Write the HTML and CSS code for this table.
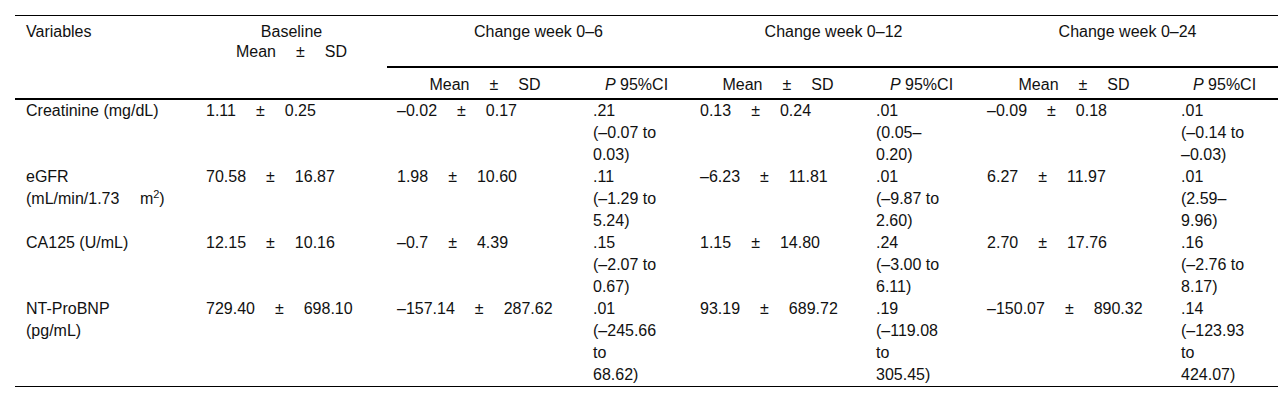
FILE: index.html
```html
<!DOCTYPE html>
<html lang="en">
<head>
<meta charset="utf-8">
<title>Table</title>
<link rel="stylesheet" href="styles.css">
</head>
<body>
<table class="data-table">
  <colgroup>
    <col class="c-var">
    <col class="c-base">
    <col class="c-mean">
    <col class="c-p">
    <col class="c-mean2">
    <col class="c-p2">
    <col class="c-mean3">
    <col class="c-p">
  </colgroup>
  <thead>
    <tr class="head-1">
      <th rowspan="2" class="th-left">Variables</th>
      <th rowspan="2" class="th-center">Baseline<br>Mean<span class="pm">±</span>SD</th>
      <th colspan="2" class="th-center th-group">Change week 0–6</th>
      <th colspan="2" class="th-center th-group">Change week 0–12</th>
      <th colspan="2" class="th-center th-group">Change week 0–24</th>
    </tr>
    <tr class="head-2">
      <th class="th-center">Mean<span class="pm">±</span>SD</th>
      <th class="th-center"><i>P</i> 95%CI</th>
      <th class="th-center">Mean<span class="pm">±</span>SD</th>
      <th class="th-center"><i>P</i> 95%CI</th>
      <th class="th-center">Mean<span class="pm">±</span>SD</th>
      <th class="th-center"><i>P</i> 95%CI</th>
    </tr>
  </thead>
  <tbody>
    <tr>
      <td class="var">Creatinine (mg/dL)</td>
      <td>1.11<span class="pm">±</span>0.25</td>
      <td>–0.02<span class="pm">±</span>0.17</td>
      <td class="ci">.21<br>(–0.07 to<br>0.03)</td>
      <td>0.13<span class="pm">±</span>0.24</td>
      <td class="ci">.01<br>(0.05–<br>0.20)</td>
      <td>–0.09<span class="pm">±</span>0.18</td>
      <td class="ci">.01<br>(–0.14 to<br>–0.03)</td>
    </tr>
    <tr>
      <td class="var">eGFR <span class="unit">(mL/min/1.73<span class="sq">m<sup>2</sup></span>)</span></td>
      <td>70.58<span class="pm">±</span>16.87</td>
      <td>1.98<span class="pm">±</span>10.60</td>
      <td class="ci">.11<br>(–1.29 to<br>5.24)</td>
      <td>–6.23<span class="pm">±</span>11.81</td>
      <td class="ci">.01<br>(–9.87 to<br>2.60)</td>
      <td>6.27<span class="pm">±</span>11.97</td>
      <td class="ci">.01<br>(2.59–<br>9.96)</td>
    </tr>
    <tr>
      <td class="var">CA125 (U/mL)</td>
      <td>12.15<span class="pm">±</span>10.16</td>
      <td>–0.7<span class="pm">±</span>4.39</td>
      <td class="ci">.15<br>(–2.07 to<br>0.67)</td>
      <td>1.15<span class="pm">±</span>14.80</td>
      <td class="ci">.24<br>(–3.00 to<br>6.11)</td>
      <td>2.70<span class="pm">±</span>17.76</td>
      <td class="ci">.16<br>(–2.76 to<br>8.17)</td>
    </tr>
    <tr class="last">
      <td class="var">NT-ProBNP (pg/mL)</td>
      <td>729.40<span class="pm">±</span>698.10</td>
      <td>–157.14<span class="pm">±</span>287.62</td>
      <td class="ci">.01<br>(–245.66<br>to<br>68.62)</td>
      <td>93.19<span class="pm">±</span>689.72</td>
      <td class="ci">.19<br>(–119.08<br>to<br>305.45)</td>
      <td>–150.07<span class="pm">±</span>890.32</td>
      <td class="ci">.14<br>(–123.93<br>to<br>424.07)</td>
    </tr>
  </tbody>
</table>
</body>
</html>
```

FILE: styles.css
```css
html, body {
  margin: 0;
  padding: 0;
  background: #ffffff;
}

body {
  font-family: "Liberation Sans", Arial, sans-serif;
  font-size: 16px;
  color: #111111;
}

.data-table {
  margin: 15px 0 0 15px;
  width: 1263px;
  border-collapse: collapse;
  table-layout: fixed;
}

.c-var { width: 181px; }
.c-base { width: 191px; }
.c-mean { width: 196px; }
.c-p { width: 107px; }
.c-mean2 { width: 176px; }
.c-p2 { width: 111px; }
.c-mean3 { width: 194px; }

.data-table th,
.data-table td {
  padding: 0 10px;
  vertical-align: top;
  text-align: left;
  font-weight: normal;
}

.data-table .head-1 th {
  border-top: 1px solid #000;
  line-height: 20px;
  padding-top: 6px;
  padding-bottom: 24px;
}

.data-table .th-left {
  padding-left: 11px;
}

.data-table .th-center {
  text-align: center;
}

.data-table .head-1 .th-group {
  border-bottom: 2px solid #000;
}

.data-table .head-2 th {
  line-height: 20px;
  padding-top: 7px;
  padding-bottom: 3px;
  border-bottom: 2px solid #000;
}

.data-table .head-1 th[rowspan] {
  border-bottom: 2px solid #000;
}

.data-table td {
  line-height: 22px;
  padding-top: 0;
  padding-bottom: 0;
}

.data-table td.var {
  padding-left: 11px;
  padding-right: 32px;
}

.data-table td.ci {
  white-space: nowrap;
}

.data-table .last td {
  border-bottom: 1px solid #000;
}

.pm {
  margin: 0 20px;
}

.unit {
  white-space: nowrap;
}

.sq {
  margin-left: 20.5px;
}

sup {
  font-size: 11px;
  line-height: 0;
  vertical-align: 6px;
}
```
